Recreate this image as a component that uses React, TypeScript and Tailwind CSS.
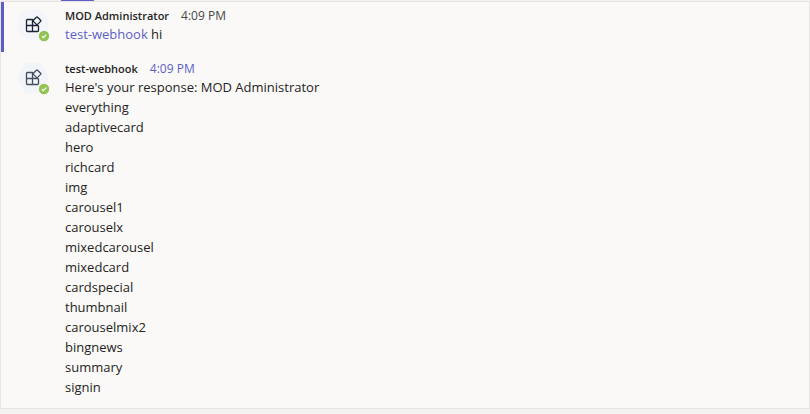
import React from "react";

const commands = [
  "everything",
  "adaptivecard",
  "hero",
  "richcard",
  "img",
  "carousel1",
  "carouselx",
  "mixedcarousel",
  "mixedcard",
  "cardspecial",
  "thumbnail",
  "carouselmix2",
  "bingnews",
  "summary",
  "signin",
];

function Avatar({ shape, ink }: { shape: "circle" | "hexagon"; ink: string }) {
  return (
    <div className="relative size-8 shrink-0">
      <svg viewBox="0 0 32 32" className="size-8" aria-hidden="true">
        {shape === "circle" ? (
          <circle cx="16" cy="16" r="16" fill="#f3f5f8" />
        ) : (
          <path
            d="M9.5 1h13a2.5 2.5 0 0 1 2.2 1.3l6.6 12.2a3 3 0 0 1 0 3l-6.6 12.2a2.5 2.5 0 0 1-2.2 1.3h-13a2.5 2.5 0 0 1-2.2-1.3L.7 17.5a3 3 0 0 1 0-3L7.3 2.3A2.5 2.5 0 0 1 9.5 1Z"
            fill="#f1f4f8"
          />
        )}
        <g fill="none" stroke={ink} strokeWidth="1.3" strokeLinejoin="round">
          <path d="M15.5 16.5v-6h-5a1 1 0 0 0-1 1v10a1 1 0 0 0 1 1h10a1 1 0 0 0 1-1v-4a1 1 0 0 0-1-1h-11M15.5 16.5v6" />
          <path d="M19.4 8.2a.8.8 0 0 1 1.2 0l3 3a.8.8 0 0 1 0 1.2l-3 3a.8.8 0 0 1-1.2 0l-3-3a.8.8 0 0 1 0-1.2Z" />
        </g>
      </svg>
      <svg
        viewBox="0 0 12 12"
        className="absolute -right-px -bottom-px size-3"
        role="img"
        aria-label="Available"
      >
        <circle cx="6" cy="6" r="5.2" fill="#92c353" />
        <path d="M3.9 6.2l1.500 1.500 2.800-3" fill="none" stroke="#fff" strokeWidth="1.1" />
      </svg>
    </div>
  );
}

export default function App() {
  return (
    <div className="min-h-screen bg-[#f3f2f1] pb-1 font-['Open_Sans','Noto_Sans',sans-serif] text-[#252423]">
      <div className="h-px pl-[61px]">
        <div className="h-px w-[33px] bg-[#5b5fc7]" />
      </div>
      <main className="border border-[#e6e5e4] bg-[#faf9f8] pb-[11px]">
        <article className="flex gap-4 border-l-[3px] border-[#5b5fc7] pt-[6px] pb-2 pl-[13px]">
          <div className="pt-px">
            <Avatar shape="circle" ink="#1b2236" />
          </div>
          <div>
            <header className="flex items-baseline gap-3 leading-4">
              <span className="text-[11px] font-semibold">MOD Administrator</span>
              <time className="text-[12px] text-[#484644]">4:09 PM</time>
            </header>
            <p className="text-[13px] leading-5">
              <a href="#test-webhook" className="text-[#5b5fc7]">test-webhook</a> hi
            </p>
          </div>
        </article>
        <article className="flex gap-4 pt-[9px] pl-4">
          <div className="pt-px">
            <Avatar shape="hexagon" ink="#454d5f" />
          </div>
          <div>
            <header className="flex items-baseline gap-3 leading-4">
              <span className="text-[11px] font-semibold">test-webhook</span>
              <time className="text-[12px] text-[#5b5fc7]">4:09 PM</time>
            </header>
            <div className="text-[13px] leading-5">
              <p>Here's your response: MOD Administrator</p>
              {commands.map((command) => (
                <p key={command}>{command}</p>
              ))}
            </div>
          </div>
        </article>
      </main>
    </div>
  );
}
